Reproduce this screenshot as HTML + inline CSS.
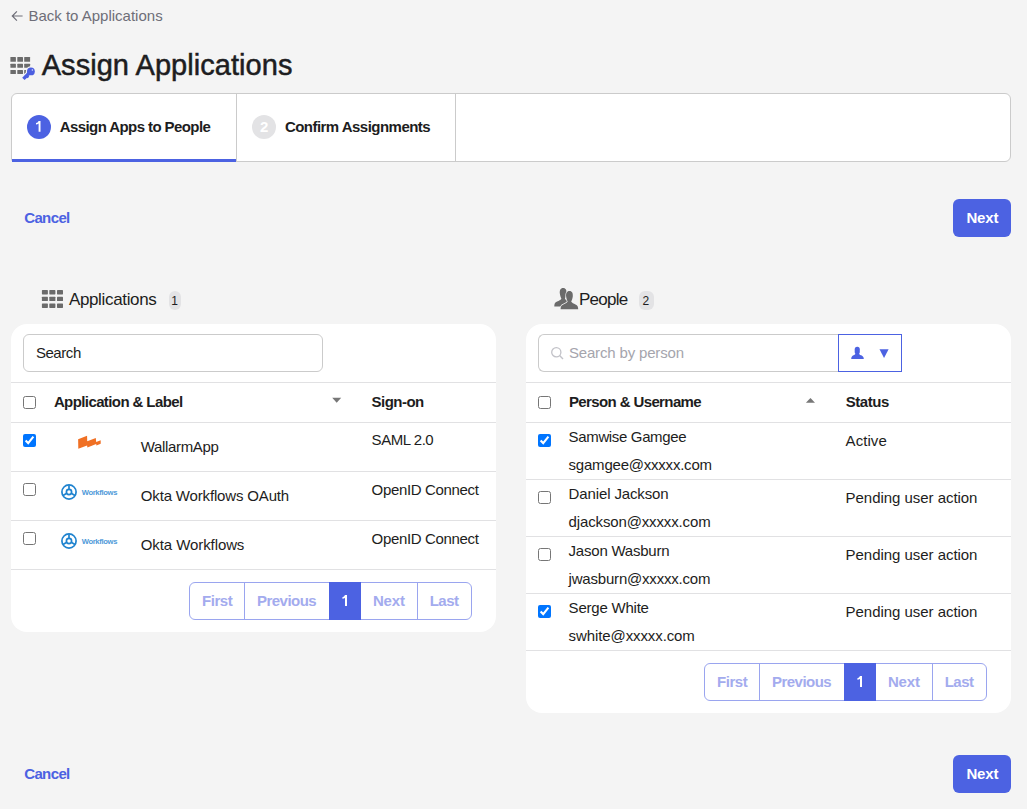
<!DOCTYPE html>
<html><head><meta charset="utf-8">
<style>
*{box-sizing:border-box;margin:0;padding:0}
html,body{width:1027px;height:809px;overflow:hidden;background:#f4f4f4;font-family:"Liberation Sans",sans-serif;color:#1d1d21}
.t{position:absolute;white-space:nowrap;line-height:normal}
.b{position:absolute}
input[type=checkbox]{position:absolute;width:13px;height:13px;margin:0}
</style></head><body>
<svg class="b" style="left:10px;top:8.5px" width="14" height="14" viewBox="0 0 14 14"><path d="M6.9 2.4 L2.3 7 L6.9 11.6 M2.3 7 H12.6" fill="none" stroke="#6e6e78" stroke-width="1.2"/></svg>
<div class="t" style="left:28.4px;top:7.42px;font-size:15px;color:#6e6e78;letter-spacing:0px;">Back to Applications</div>
<svg class="b" style="left:6px;top:52px" width="34" height="32" viewBox="0 0 34 32">
<g fill="#6b6b6b">
<rect x="4.4" y="5.1" width="5.5" height="4.6" rx="0.5"/><rect x="11.3" y="5.1" width="5.7" height="4.6" rx="0.5"/><rect x="18.2" y="5.1" width="5.9" height="4.6" rx="0.5"/>
<rect x="4.4" y="11.7" width="5.5" height="4.1" rx="0.5"/><rect x="11.3" y="11.7" width="5.7" height="4.1" rx="0.5"/><rect x="18.2" y="11.7" width="5.9" height="4.1" rx="0.5"/>
<rect x="4.4" y="18" width="5.5" height="3.9" rx="0.5"/><rect x="11.3" y="18" width="5.7" height="3.9" rx="0.5"/><rect x="18.2" y="18" width="5.9" height="3.9" rx="0.5"/>
</g>
<g fill="#f4f4f4" stroke="#f4f4f4" stroke-width="2.4" stroke-linejoin="round">
<circle cx="24.9" cy="19.4" r="3.9"/>
<path d="M21.8 20.1 L24.2 22.5 L22.6 24.1 L23.2 24.7 L21.6 26.3 L21.0 25.7 L18.6 28.1 L16.2 25.7 Z"/>
</g>
<g fill="#4c5fe0">
<circle cx="24.9" cy="19.4" r="3.9"/>
<path d="M21.8 20.1 L24.2 22.5 L22.6 24.1 L23.2 24.7 L21.6 26.3 L21.0 25.7 L18.6 28.1 L16.2 25.7 Z"/>
</g>
<circle cx="26.4" cy="18.0" r="0.75" fill="#dfe3fb"/>
</svg>
<div class="t" style="left:41.7px;top:48.85px;font-size:29px;color:#1d1d21;letter-spacing:0.05px;-webkit-text-stroke:0.5px #1d1d21">Assign Applications</div>
<div class="b" style="left:11px;top:93px;width:1000px;height:69px;background:#fff;border:1px solid #cbcbcb;border-radius:6px 6px 6px 3px;overflow:hidden"><div class="b" style="left:224px;top:0;width:1px;height:67px;background:#cbcbcb"></div><div class="b" style="left:443px;top:0;width:1px;height:67px;background:#cbcbcb"></div></div>
<div class="b" style="left:12px;top:159px;width:224px;height:3px;background:#4c62e2"></div>
<div class="b" style="left:27px;top:115px;width:24px;height:24px;border-radius:50%;background:#4c62e2"></div>
<div class="b" style="left:252px;top:115px;width:24px;height:24px;border-radius:50%;background:#e3e3e5"></div>
<svg class="b" style="left:24px;top:112px" width="32" height="30" viewBox="0 0 32 30"><path d="M14.6 8.9 H16.5 V19.8 H14.6 V11.6 Q13.4 12.4 12.0 12.6 V11.0 Q13.9 10.6 14.6 8.9 Z" fill="#fff"/></svg>
<div class="t" style="left:260.0px;top:118.42px;font-size:15px;font-weight:bold;color:#fff;letter-spacing:0px;">2</div>
<div class="t" style="left:59.7px;top:118.42px;font-size:15px;font-weight:bold;color:#1d1d21;letter-spacing:-0.58px;">Assign Apps to People</div>
<div class="t" style="left:284.9px;top:118.42px;font-size:15px;font-weight:bold;color:#1d1d21;letter-spacing:-0.53px;">Confirm Assignments</div>
<div class="t" style="left:24.2px;top:209.23px;font-size:15px;font-weight:bold;color:#4c62e2;letter-spacing:-0.62px;">Cancel</div>
<div class="b" style="left:953px;top:199px;width:58px;height:38px;border-radius:6px;background:#4c62e2"></div>
<div class="t" style="left:966.4px;top:208.62px;font-size:15px;font-weight:bold;color:#fff;letter-spacing:-0.17px;">Next</div>
<div class="t" style="left:24.2px;top:765.22px;font-size:15px;font-weight:bold;color:#4c62e2;letter-spacing:-0.62px;">Cancel</div>
<div class="b" style="left:953px;top:755px;width:58px;height:38px;border-radius:6px;background:#4c62e2"></div>
<div class="t" style="left:966.4px;top:764.62px;font-size:15px;font-weight:bold;color:#fff;letter-spacing:-0.17px;">Next</div>
<svg class="b" style="left:41px;top:290px" width="23" height="19" viewBox="0 0 23 19"><g fill="#6b6b6b"><rect x="0.9" y="0.1" width="6" height="4.3" rx="0.6"/><rect x="8.3" y="0.1" width="6.1" height="4.3" rx="0.6"/><rect x="16" y="0.1" width="6" height="4.3" rx="0.6"/><rect x="0.9" y="6.7" width="6" height="4.3" rx="0.6"/><rect x="8.3" y="6.7" width="6.1" height="4.3" rx="0.6"/><rect x="16" y="6.7" width="6" height="4.3" rx="0.6"/><rect x="0.9" y="13.4" width="6" height="4.5" rx="0.6"/><rect x="8.3" y="13.4" width="6.1" height="4.5" rx="0.6"/><rect x="16" y="13.4" width="6" height="4.5" rx="0.6"/></g></svg>
<div class="t" style="left:68.9px;top:289.51px;font-size:17px;color:#1d1d21;letter-spacing:-0.34px;">Applications</div>
<div class="b" style="left:169px;top:291px;width:12px;height:19px;border-radius:6px;background:#e3e3e5"></div>
<div class="t" style="left:171.2px;top:294.34px;font-size:12px;color:#1d1d21;letter-spacing:0px;">1</div>
<svg class="b" style="left:548px;top:282px" width="40" height="34" viewBox="0 0 40 34">
<g fill="#6b6b6b">
<path transform="translate(-6.3 -2.9)" d="M21.45 9.0 C24.2 9.0 25.0 11.5 24.8 14.2 C24.6 16.5 23.9 18.2 23.2 19.6 C24.2 21.0 25.5 21.6 27.5 22.4 C29.6 23.2 30.2 24.8 30.2 27.3 L12.6 27.3 C12.6 24.8 13.2 23.2 15.4 22.4 C17.4 21.6 18.7 21.0 19.7 19.6 C19.0 18.2 18.3 16.5 18.1 14.2 C17.9 11.5 18.7 9.0 21.45 9.0 Z"/>
</g>
<g fill="#6b6b6b" stroke="#f4f4f4" stroke-width="1.4" paint-order="stroke">
<path d="M21.45 9.0 C24.2 9.0 25.0 11.5 24.8 14.2 C24.6 16.5 23.9 18.2 23.2 19.6 C24.2 21.0 25.5 21.6 27.5 22.4 C29.6 23.2 30.2 24.8 30.2 27.3 L12.6 27.3 C12.6 24.8 13.2 23.2 15.4 22.4 C17.4 21.6 18.7 21.0 19.7 19.6 C19.0 18.2 18.3 16.5 18.1 14.2 C17.9 11.5 18.7 9.0 21.45 9.0 Z"/>
</g>
</svg>
<div class="t" style="left:579px;top:289.51px;font-size:17px;color:#1d1d21;letter-spacing:-0.74px;">People</div>
<div class="b" style="left:639px;top:291px;width:15px;height:19px;border-radius:6px;background:#e3e3e5"></div>
<div class="t" style="left:642.4px;top:294.34px;font-size:12px;color:#1d1d21;letter-spacing:0px;">2</div>
<div class="b" style="left:11px;top:324px;width:485px;height:308px;background:#fff;border-radius:16px"></div>
<div class="b" style="left:526px;top:324px;width:485px;height:389px;background:#fff;border-radius:16px"></div>
<div class="b" style="left:11px;top:382px;width:485px;height:1px;background:#e1e1e3"></div>
<div class="b" style="left:11px;top:422px;width:485px;height:1px;background:#e1e1e3"></div>
<div class="b" style="left:11px;top:471px;width:485px;height:1px;background:#e1e1e3"></div>
<div class="b" style="left:11px;top:520px;width:485px;height:1px;background:#e1e1e3"></div>
<div class="b" style="left:11px;top:569px;width:485px;height:1px;background:#e1e1e3"></div>
<div class="b" style="left:526px;top:382px;width:485px;height:1px;background:#e1e1e3"></div>
<div class="b" style="left:526px;top:422px;width:485px;height:1px;background:#e1e1e3"></div>
<div class="b" style="left:526px;top:479px;width:485px;height:1px;background:#e1e1e3"></div>
<div class="b" style="left:526px;top:536px;width:485px;height:1px;background:#e1e1e3"></div>
<div class="b" style="left:526px;top:593px;width:485px;height:1px;background:#e1e1e3"></div>
<div class="b" style="left:526px;top:650px;width:485px;height:1px;background:#e1e1e3"></div>
<div class="b" style="left:23px;top:334px;width:300px;height:38px;border:1px solid #cbcbcb;border-radius:6px"></div>
<div class="t" style="left:35.9px;top:344.03px;font-size:15px;color:#1d1d21;letter-spacing:-0.44px;">Search</div>
<input type="checkbox" style="left:23px;top:396px">
<div class="t" style="left:53.9px;top:393.23px;font-size:15px;font-weight:bold;color:#1d1d21;letter-spacing:-0.6px;">Application &amp; Label</div>
<svg class="b" style="left:332px;top:397px" width="10" height="6" viewBox="0 0 10 6"><path d="M0.2 0.8 H9.2 L4.7 5.7 Z" fill="#777"/></svg>
<div class="t" style="left:371.6px;top:393.12px;font-size:15px;font-weight:bold;color:#1d1d21;letter-spacing:-0.53px;">Sign-on</div>
<input type="checkbox" checked style="left:23px;top:434px">
<input type="checkbox" style="left:23px;top:483px">
<input type="checkbox" style="left:23px;top:532px">
<svg class="b" style="left:72px;top:430px" width="36" height="24" viewBox="0 0 36 24"><path d="M6.13 9.29 L15.07 5.78 L15.25 11.2 L23.8 8.06 L24.2 11.9 L28.7 10.2 L28.7 13.8 L24.4 15.6 L24.2 14 L15.4 17.5 L15.1 15.4 L6.3 18.75 Z" fill="#f07024"/></svg>
<svg class="b" style="left:56px;top:480px" width="66" height="26" viewBox="0 0 66 26">
<g fill="none" stroke="#1f83cf" stroke-width="1.7">
<circle cx="13" cy="12" r="7.1"/>
<circle cx="13" cy="12" r="2.6"/>
<path d="M13 5.2 V9.4 M10.75 13.3 L7.1 15.4 M15.25 13.3 L18.9 15.4"/>
</g>
<text x="25.7" y="14.8" font-family="Liberation Sans" font-weight="bold" font-size="7.6" fill="#4f9ad9" letter-spacing="-0.32">Workflows</text>
</svg>
<svg class="b" style="left:56px;top:529px" width="66" height="26" viewBox="0 0 66 26">
<g fill="none" stroke="#1f83cf" stroke-width="1.7">
<circle cx="13" cy="12" r="7.1"/>
<circle cx="13" cy="12" r="2.6"/>
<path d="M13 5.2 V9.4 M10.75 13.3 L7.1 15.4 M15.25 13.3 L18.9 15.4"/>
</g>
<text x="25.7" y="14.8" font-family="Liberation Sans" font-weight="bold" font-size="7.6" fill="#4f9ad9" letter-spacing="-0.32">Workflows</text>
</svg>
<div class="t" style="left:140.8px;top:438.03px;font-size:15px;color:#1d1d21;letter-spacing:-0.34px;">WallarmApp</div>
<div class="t" style="left:140.8px;top:487.12px;font-size:15px;color:#1d1d21;letter-spacing:-0.16px;">Okta Workflows OAuth</div>
<div class="t" style="left:140.8px;top:536.22px;font-size:15px;color:#1d1d21;letter-spacing:-0.09px;">Okta Workflows</div>
<div class="t" style="left:371.6px;top:431.32px;font-size:15px;color:#1d1d21;letter-spacing:-0.46px;">SAML 2.0</div>
<div class="t" style="left:371.6px;top:480.62px;font-size:15px;color:#1d1d21;letter-spacing:-0.34px;">OpenID Connect</div>
<div class="t" style="left:371.6px;top:529.62px;font-size:15px;color:#1d1d21;letter-spacing:-0.34px;">OpenID Connect</div>
<div class="b" style="left:189px;top:582px;width:283px;height:38px;border:1px solid #9aa5ef;border-radius:6px;overflow:hidden"><div class="b" style="left:53.8px;top:0;width:1px;height:36px;background:#9aa5ef"></div><div class="b" style="left:226.7px;top:0;width:1px;height:36px;background:#9aa5ef"></div></div>
<div class="b" style="left:329px;top:582px;width:32px;height:38px;background:#4c62e2"></div>
<svg class="b" style="left:341.7px;top:595px" width="8" height="12" viewBox="0 0 8 12"><path d="M3.0 0.1 H5.0 V11.0 H3.0 V2.9 Q1.8 3.6 0.4 3.8 V2.2 Q2.3 1.8 3.0 0.1 Z" fill="#fff"/></svg>
<div class="t" style="left:202.1px;top:591.92px;font-size:15px;font-weight:bold;color:#a3abee;letter-spacing:-0.48px;">First</div>
<div class="t" style="left:257.0px;top:591.92px;font-size:15px;font-weight:bold;color:#a3abee;letter-spacing:-0.53px;">Previous</div>
<div class="t" style="left:372.9px;top:591.92px;font-size:15px;font-weight:bold;color:#a3abee;letter-spacing:-0.17px;">Next</div>
<div class="t" style="left:429.7px;top:591.92px;font-size:15px;font-weight:bold;color:#a3abee;letter-spacing:-0.52px;">Last</div>
<div class="b" style="left:704px;top:663px;width:283px;height:38px;border:1px solid #9aa5ef;border-radius:6px;overflow:hidden"><div class="b" style="left:53.8px;top:0;width:1px;height:36px;background:#9aa5ef"></div><div class="b" style="left:226.7px;top:0;width:1px;height:36px;background:#9aa5ef"></div></div>
<div class="b" style="left:844px;top:663px;width:32px;height:38px;background:#4c62e2"></div>
<svg class="b" style="left:856.7px;top:676px" width="8" height="12" viewBox="0 0 8 12"><path d="M3.0 0.1 H5.0 V11.0 H3.0 V2.9 Q1.8 3.6 0.4 3.8 V2.2 Q2.3 1.8 3.0 0.1 Z" fill="#fff"/></svg>
<div class="t" style="left:717.1px;top:672.92px;font-size:15px;font-weight:bold;color:#a3abee;letter-spacing:-0.48px;">First</div>
<div class="t" style="left:772.0px;top:672.92px;font-size:15px;font-weight:bold;color:#a3abee;letter-spacing:-0.53px;">Previous</div>
<div class="t" style="left:887.9px;top:672.92px;font-size:15px;font-weight:bold;color:#a3abee;letter-spacing:-0.17px;">Next</div>
<div class="t" style="left:944.7px;top:672.92px;font-size:15px;font-weight:bold;color:#a3abee;letter-spacing:-0.52px;">Last</div>
<div class="b" style="left:538px;top:334px;width:302px;height:38px;border:1px solid #cbcbcb;border-right:none;border-radius:6px 0 0 6px"></div>
<div class="b" style="left:838px;top:334px;width:64px;height:38px;border:1px solid #4c62e2"></div>
<svg class="b" style="left:550px;top:346px" width="15" height="14" viewBox="0 0 15 14"><circle cx="6.3" cy="6.3" r="4.6" fill="none" stroke="#c2c2c8" stroke-width="1.3"/><path d="M9.6 9.6 L13 13" stroke="#c2c2c8" stroke-width="1.4"/></svg>
<div class="t" style="left:568.9px;top:344.12px;font-size:15px;color:#a5a5ad;letter-spacing:-0.16px;">Search by person</div>
<svg class="b" style="left:850px;top:346px" width="16" height="14" viewBox="0 0 16 14"><g fill="#4c62e2"><rect x="4.7" y="0.8" width="5.1" height="7.6" rx="2.4" ry="2.6"/><path d="M1.2 13.1 Q1.2 9.8 4.2 9.0 L5.6 7.8 L8.8 7.8 L10.2 9.0 Q13.8 9.8 13.8 13.1 Z"/></g></svg>
<svg class="b" style="left:879px;top:349px" width="10" height="10" viewBox="0 0 10 10"><path d="M0.5 0.3 H9.6 L5.05 9 Z" fill="#4c62e2"/></svg>
<input type="checkbox" style="left:538px;top:396px">
<div class="t" style="left:568.9px;top:393.23px;font-size:15px;font-weight:bold;color:#1d1d21;letter-spacing:-0.61px;">Person &amp; Username</div>
<svg class="b" style="left:805px;top:397px" width="10" height="6" viewBox="0 0 10 6"><path d="M0.9 5.8 H10 L5.45 0.9 Z" fill="#777"/></svg>
<div class="t" style="left:845.7px;top:392.93px;font-size:15px;font-weight:bold;color:#1d1d21;letter-spacing:-0.44px;">Status</div>
<input type="checkbox" checked style="left:538px;top:434px">
<div class="t" style="left:568.6px;top:428.23px;font-size:15px;color:#1d1d21;letter-spacing:-0.35px;">Samwise Gamgee</div>
<div class="t" style="left:568.6px;top:456.12px;font-size:15px;color:#1d1d21;letter-spacing:-0.22px;">sgamgee@xxxxx.com</div>
<div class="t" style="left:845.6px;top:432.32px;font-size:15px;color:#1d1d21;letter-spacing:0.06px;">Active</div>
<input type="checkbox"  style="left:538px;top:491px">
<div class="t" style="left:568.6px;top:485.23px;font-size:15px;color:#1d1d21;letter-spacing:-0.13px;">Daniel Jackson</div>
<div class="t" style="left:568.6px;top:513.12px;font-size:15px;color:#1d1d21;letter-spacing:-0.14px;">djackson@xxxxx.com</div>
<div class="t" style="left:845.6px;top:489.32px;font-size:15px;color:#1d1d21;letter-spacing:-0.04px;">Pending user action</div>
<input type="checkbox"  style="left:538px;top:548px">
<div class="t" style="left:568.6px;top:542.22px;font-size:15px;color:#1d1d21;letter-spacing:-0.22px;">Jason Wasburn</div>
<div class="t" style="left:568.6px;top:570.12px;font-size:15px;color:#1d1d21;letter-spacing:-0.2px;">jwasburn@xxxxx.com</div>
<div class="t" style="left:845.6px;top:546.32px;font-size:15px;color:#1d1d21;letter-spacing:-0.04px;">Pending user action</div>
<input type="checkbox" checked style="left:538px;top:605px">
<div class="t" style="left:568.6px;top:599.22px;font-size:15px;color:#1d1d21;letter-spacing:-0.22px;">Serge White</div>
<div class="t" style="left:568.6px;top:627.12px;font-size:15px;color:#1d1d21;letter-spacing:-0.1px;">swhite@xxxxx.com</div>
<div class="t" style="left:845.6px;top:603.32px;font-size:15px;color:#1d1d21;letter-spacing:-0.04px;">Pending user action</div>
</body></html>
